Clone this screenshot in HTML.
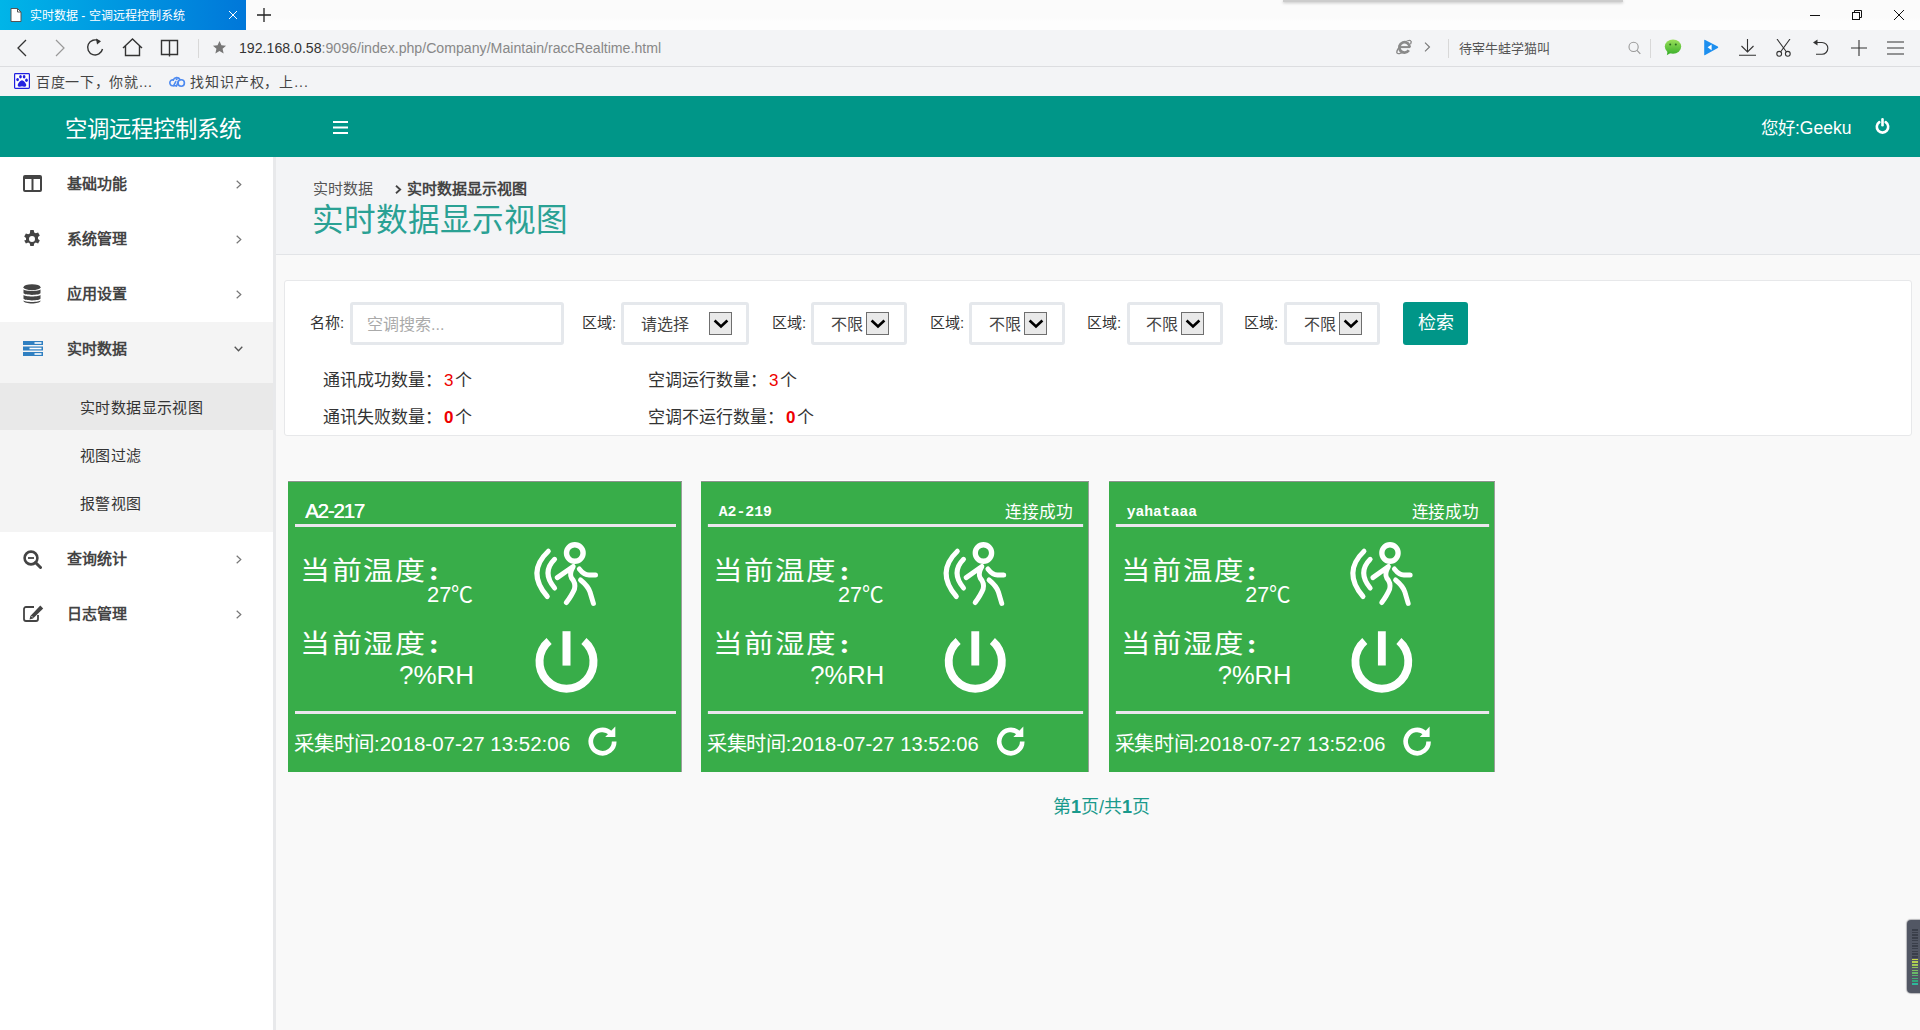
<!DOCTYPE html>
<html lang="zh-CN"><head><meta charset="utf-8">
<style>
*{margin:0;padding:0;box-sizing:border-box}
html,body{width:1920px;height:1030px;overflow:hidden;font-family:"Liberation Sans",sans-serif;background:#f9f9f9;position:relative}
.abs{position:absolute}
#tabbar{left:0;top:0;width:1920px;height:30px;background:linear-gradient(#fbfbfb,#fbfbfb 60%,#fdfdfd 70%,#fdfdfd)}
#tab{left:0;top:0;width:246px;height:30px;background:linear-gradient(90deg,#00b5e8,#0077d9)}
#addr{left:0;top:30px;width:1920px;height:37px;background:#f3f4f6;border-bottom:1px solid #dcdde0}
#bm{left:0;top:67px;width:1920px;height:29px;background:#f3f4f6}
#hdr{left:0;top:96px;width:1920px;height:61px;background:#009688}
#side{left:0;top:157px;width:276px;height:873px;background:#fff;border-right:3px solid #e8e9eb}
#crumb{left:276px;top:157px;width:1645px;height:98px;background:#f3f4f6;border-bottom:1px solid #e2e4e7}
#filter{left:284px;top:280px;width:1628px;height:156px;background:#fff;border:1px solid #e7e8ea;border-radius:3px}
.side-t{font-size:15px;line-height:22px;color:#444;font-weight:bold;white-space:nowrap}
.sub-t{font-size:15px;line-height:22px;color:#333;white-space:nowrap;letter-spacing:.4px;margin-top:2px}
.flab{font-size:15px;line-height:22px;color:#333;white-space:nowrap}
.inp{height:43px;border:3px solid #e5e8ec;border-radius:3px;background:#fff}
.stxt{font-size:16px;line-height:22px;color:#444;white-space:nowrap;margin-top:2px}
.arr{width:23px;height:23px;border:1px solid #6f6f6f;background:#e9e9e9;display:flex;align-items:center;justify-content:center}
.stat{font-size:17px;line-height:24px;color:#333;white-space:nowrap;margin-top:2px}
.stat span,.stat b{display:inline-block;margin:0 2px 0 2px}
.card{top:481px;height:291px;background:#38ad49;box-shadow:0 -1px 0 #fff, inset 0 1px 0 #8d938e, inset -1px 0 0 #9aa09b}
.card .abs{position:absolute}
.cname{color:#fff;white-space:nowrap;line-height:22px}
.cstat{font-family:"Liberation Serif",serif;font-size:17px;line-height:22px;color:#fff;white-space:nowrap}
.cline{height:3px;background:#ebe6ee}
.col{margin-left:2px;font-weight:bold;font-size:32px}
.cbig{font-family:"Liberation Serif",serif;font-size:30px;line-height:36px;letter-spacing:1.6px;transform:scaleY(.87);transform-origin:0 50%;color:#fff;white-space:nowrap}
.cval{color:#fff;white-space:nowrap;line-height:26px}
.ctime{font-size:20.5px;line-height:30px;color:#fff;white-space:nowrap}
</style></head><body>

<div id="tabbar" class="abs"></div>
<div class="abs" style="left:1283px;top:0;width:340px;height:2px;background:#ccc;box-shadow:0 1px 3px rgba(0,0,0,.25)"></div>
<div id="tab" class="abs"></div>
<svg class="abs" style="left:10px;top:8px" width="12" height="14" viewBox="0 0 12 14"><path d="M1 .5h6.5L11 4v9.5H1z" fill="#fff" stroke="#555" stroke-width="1"/><path d="M7.5 .5V4H11" fill="none" stroke="#555" stroke-width="1"/></svg>
<div class="abs" id="tabtitle" style="left:30px;top:6px;font-size:12px;color:#fff;white-space:nowrap">实时数据 - 空调远程控制系统</div>
<svg class="abs" style="left:228px;top:10px" width="10" height="10" viewBox="0 0 10 10"><path d="M1 1L9 9M9 1L1 9" stroke="#fff" stroke-width="1"/></svg>
<svg class="abs" style="left:257px;top:8px" width="14" height="14" viewBox="0 0 14 14"><path d="M7 0V14M0 7H14" stroke="#222" stroke-width="1.3"/></svg>
<svg class="abs" style="left:1810px;top:15px" width="10" height="1"><rect width="10" height="1" fill="#111"/></svg>
<svg class="abs" style="left:1852px;top:10px" width="10" height="10" viewBox="0 0 10 10"><rect x=".5" y="2.5" width="7" height="7" fill="none" stroke="#111"/><path d="M2.5 2.5V.5h7v7h-2" fill="none" stroke="#111"/></svg>
<svg class="abs" style="left:1894px;top:10px" width="10" height="10" viewBox="0 0 10 10"><path d="M0 0L10 10M10 0L0 10" stroke="#111" stroke-width="1"/></svg>
<div id="addr" class="abs"></div>
<svg class="abs" style="left:16px;top:39px" width="12" height="18" viewBox="0 0 12 18"><path d="M10 1L2 9L10 17" fill="none" stroke="#333" stroke-width="1.3"/></svg>
<svg class="abs" style="left:54px;top:39px" width="12" height="18" viewBox="0 0 12 18"><path d="M2 1L10 9L2 17" fill="none" stroke="#999" stroke-width="1.2"/></svg>
<svg class="abs" style="left:86px;top:37px" width="20" height="20" viewBox="0 0 20 20"><path d="M16.5 12A7.5 7.5 0 1 1 13 4" fill="none" stroke="#333" stroke-width="1.4"/><path d="M10 1.5L15 4.2L11 7.5z" fill="#333"/></svg>
<svg class="abs" style="left:122px;top:38px" width="21" height="19" viewBox="0 0 21 19"><path d="M1 10L10.5 1L20 10M3.5 8V17.5H17.5V8" fill="none" stroke="#333" stroke-width="1.4"/></svg>
<svg class="abs" style="left:160px;top:39px" width="19" height="18" viewBox="0 0 19 18"><path d="M1.5 1.5H9.5V15.5H1.5zM9.5 1.5H17.5V15.5H9.5z" fill="none" stroke="#333" stroke-width="1.4"/><path d="M9.5 15.5V17.5" stroke="#333" stroke-width="1.4"/></svg>
<div class="abs" style="left:198px;top:39px;width:1px;height:19px;background:#d8d8d8"></div>
<svg class="abs" style="left:212px;top:40px" width="15" height="15" viewBox="0 0 24 24"><path d="M12 1.5l3.1 7 7.4.6-5.6 4.9 1.7 7.4L12 17.5l-6.6 3.9 1.7-7.4L1.5 9.1l7.4-.6z" fill="#777"/></svg>
<div class="abs" id="url" style="left:239px;top:40px;font-size:14.15px;color:#888;white-space:nowrap"><span style="color:#333">192.168.0.58</span>:9096/index.php/Company/Maintain/raccRealtime.html</div>

<svg class="abs" style="left:1395px;top:38px" width="17" height="17" viewBox="0 0 17 17"><path d="M14.7 9.3A5.2 5.2 0 1 0 13.8 12.3" fill="none" stroke="#8a8a8a" stroke-width="2.8"/><path d="M4.8 9.1H15.2" stroke="#8a8a8a" stroke-width="2"/><clipPath id="iec"><path clip-rule="evenodd" d="M-2-2H19V19H-2zM9.5 9.3m-6.6 0a6.6 6.6 0 1 0 13.2 0a6.6 6.6 0 1 0-13.2 0z"/></clipPath><ellipse clip-path="url(#iec)" cx="9" cy="9" rx="9.2" ry="3.2" transform="rotate(-42 9 9)" fill="none" stroke="#8a8a8a" stroke-width="1.4"/></svg>
<svg class="abs" style="left:1424px;top:42px" width="7" height="10" viewBox="0 0 7 10"><path d="M1 .7L5.5 5L1 9.3" fill="none" stroke="#777" stroke-width="1.1"/></svg>
<div class="abs" style="left:1448px;top:39px;width:1px;height:19px;background:#d8d8d8"></div>
<div class="abs" id="srch" style="left:1459px;top:38px;font-size:13px;color:#555;white-space:nowrap">待宰牛蛙学猫叫</div>
<svg class="abs" style="left:1628px;top:41px" width="13" height="14" viewBox="0 0 13 14"><circle cx="5.6" cy="5.9" r="4.6" fill="none" stroke="#999" stroke-width="1.1"/><path d="M9 9.4L12.3 12.8" stroke="#999" stroke-width="1.2"/></svg>
<div class="abs" style="left:1650px;top:39px;width:1px;height:19px;background:#d8d8d8"></div>
<svg class="abs" style="left:1664px;top:39px" width="18" height="17" viewBox="0 0 18 17"><defs><linearGradient id="wg" x1="0" y1="0" x2="0" y2="1"><stop offset="0" stop-color="#9be05b"/><stop offset="1" stop-color="#3fb22d"/></linearGradient></defs><ellipse cx="9" cy="7.6" rx="8.2" ry="7.2" fill="url(#wg)"/><path d="M3.5 12.5L2.8 16.3L7 13.8z" fill="#3fb22d"/><circle cx="6.2" cy="5.6" r="1" fill="#2a6a20"/><circle cx="11.8" cy="5.6" r="1" fill="#2a6a20"/></svg>
<svg class="abs" style="left:1703px;top:39px" width="16" height="17" viewBox="0 0 16 17"><path d="M1.2 1.5Q1 .3 2.2.9L14.8 7.6Q15.8 8.3 14.8 9L2.2 15.9Q1 16.6 1.2 15.3z" fill="#1d8fef"/><path d="M4.6 8.3L8.6 5.4V11.2z" fill="#fff"/></svg>
<svg class="abs" style="left:1738px;top:39px" width="19" height="17" viewBox="0 0 19 17"><path d="M9.5 0V13M3.5 7L9.5 13L15.5 7M1 16.3H18" fill="none" stroke="#333" stroke-width="1.1"/></svg>
<svg class="abs" style="left:1775px;top:39px" width="17" height="18" viewBox="0 0 17 18"><path d="M2 0L11.5 13M15 0L5.5 13" fill="none" stroke="#333" stroke-width="1.1"/><circle cx="4.2" cy="14.8" r="2.4" fill="none" stroke="#333" stroke-width="1.1"/><circle cx="12.8" cy="14.8" r="2.4" fill="none" stroke="#333" stroke-width="1.1"/></svg>
<svg class="abs" style="left:1812px;top:39px" width="18" height="17" viewBox="0 0 18 17"><path d="M4 3.5H10A5.8 5.8 0 0 1 10 15.2H4" fill="none" stroke="#333" stroke-width="1.1"/><path d="M1 3.5L5.5 0.5V6.5z" fill="#333"/></svg>
<svg class="abs" style="left:1851px;top:40px" width="16" height="16" viewBox="0 0 16 16"><path d="M8 0V16M0 8H16" stroke="#333" stroke-width="1.1"/></svg>
<svg class="abs" style="left:1887px;top:41px" width="17" height="14" viewBox="0 0 17 14"><path d="M0 1H17M0 7H17M0 13H17" stroke="#333" stroke-width="1.1"/></svg>
<div id="bm" class="abs"></div>
<svg class="abs" style="left:14px;top:73px" width="16" height="16" viewBox="0 0 16 16"><rect x=".6" y=".6" width="14.8" height="14.8" rx=".8" fill="#fff" stroke="#1f1fe0" stroke-width="1.2"/><path d="M8 7.3C9.5 7.3 11.2 9.6 12 11C12.8 12.6 11.8 14.2 10.3 13.8C9.2 13.5 8.6 13.3 8 13.3S6.8 13.5 5.7 13.8C4.2 14.2 3.2 12.6 4 11C4.8 9.6 6.5 7.3 8 7.3z" fill="#2323e0"/><ellipse cx="3.6" cy="6.6" rx="1.35" ry="1.7" fill="#1f1fe0"/><ellipse cx="6.5" cy="3.8" rx="1.35" ry="1.8" fill="#1f1fe0"/><ellipse cx="10.1" cy="3.8" rx="1.35" ry="1.8" fill="#1f1fe0"/><ellipse cx="12.5" cy="7.2" rx="1.35" ry="1.7" fill="#1f1fe0"/></svg>
<div class="abs" id="bm1" style="left:36px;top:71px;font-size:14px;letter-spacing:.7px;color:#444;white-space:nowrap">百度一下，你就...</div>
<svg class="abs" style="left:168px;top:75px" width="18" height="13" viewBox="0 0 18 13"><g fill="none" stroke="#4d8af0" stroke-width="1.6" stroke-linecap="round"><path d="M5.2 4.8A2.8 2.8 0 1 0 4.5 10.8H8.5"/><path d="M5.2 5.2A3.7 3.7 0 0 1 12 4.6"/><circle cx="13.2" cy="8" r="3.2"/><path d="M7.8 6.6L5.6 10.6M10.6 5.8L8.5 11"/></g><circle cx="8.6" cy="4.3" r="1" fill="#4d8af0"/></svg>
<div class="abs" id="bm2" style="left:190px;top:71px;font-size:14px;letter-spacing:.9px;color:#444;white-space:nowrap">找知识产权，上...</div>
<div id="hdr" class="abs"></div>
<div class="abs" id="apptitle" style="left:65px;top:115px;font-size:22.4px;line-height:30px;color:#fff;font-weight:300;white-space:nowrap">空调远程控制系统</div>
<svg class="abs" style="left:333px;top:121px" width="15" height="13" viewBox="0 0 15 13"><path d="M0 1H15M0 6.5H15M0 12H15" stroke="#fff" stroke-width="2"/></svg>
<div class="abs" id="hello" style="left:1761px;top:117px;font-size:17.5px;line-height:22px;color:#fff;white-space:nowrap">您好:Geeku</div>
<svg class="abs" style="left:1875px;top:118px" width="15" height="16" viewBox="0 0 15 16"><path d="M4.3 4.2A5.7 5.7 0 1 0 10.7 4.2" fill="none" stroke="#fff" stroke-width="2.6" stroke-linecap="round"/><path d="M7.5 1.4V7.2" stroke="#fff" stroke-width="2.6" stroke-linecap="round"/></svg>
<div id="side" class="abs"></div>
<div class="abs" style="left:0;top:322px;width:273px;height:210px;background:#f4f4f4"></div>
<div class="abs" style="left:0;top:383px;width:273px;height:47px;background:#e9e9e9"></div>
<svg class="abs" style="left:23px;top:175px" width="19" height="17" viewBox="0 0 19 17"><rect x="1" y="1" width="17" height="15" rx="1" fill="none" stroke="#444" stroke-width="2"/><rect x="1" y="1" width="17" height="3" fill="#444"/><path d="M9.5 2V16" stroke="#444" stroke-width="2"/></svg>
<div class="abs side-t" style="left:67px;top:173px">基础功能</div>
<svg class="abs" style="left:236px;top:180px" width="6" height="9" viewBox="0 0 6 9"><path d="M.7 .7L4.8 4.5L.7 8.3" fill="none" stroke="#777" stroke-width="1.2"/></svg>
<svg class="abs" style="left:23px;top:230px" width="18" height="18" viewBox="0 0 18 18"><path fill="#444" fill-rule="evenodd" d="M7.3 0h3.4l.5 2.4 1.6.9 2.3-.8 1.7 2.9-1.8 1.6v1.9l1.8 1.6-1.7 2.9-2.3-.8-1.6.9-.5 2.4H7.3l-.5-2.4-1.6-.9-2.3.8-1.7-2.9L3 10V8L1.2 6.4l1.7-2.9 2.3.8 1.6-.9zM9 6a3 3 0 1 0 0 6 3 3 0 1 0 0-6z"/></svg>
<div class="abs side-t" style="left:67px;top:228px">系统管理</div>
<svg class="abs" style="left:236px;top:235px" width="6" height="9" viewBox="0 0 6 9"><path d="M.7 .7L4.8 4.5L.7 8.3" fill="none" stroke="#777" stroke-width="1.2"/></svg>
<svg class="abs" style="left:23px;top:284px" width="18" height="20" viewBox="0 0 18 20"><ellipse cx="9" cy="3.2" rx="8.5" ry="3" fill="#444"/><path d="M.5 5.2C1 7.5 17 7.5 17.5 5.2V9C17 11.5 1 11.5 .5 9z" fill="#444"/><path d="M.5 10.8C1 13 17 13 17.5 10.8V14.5C17 17 1 17 .5 14.5z" fill="#444"/><path d="M.5 16.3C1 18.5 17 18.5 17.5 16.3V17C17 20.3 1 20.3 .5 17z" fill="#444"/></svg>
<div class="abs side-t" style="left:67px;top:283px">应用设置</div>
<svg class="abs" style="left:236px;top:290px" width="6" height="9" viewBox="0 0 6 9"><path d="M.7 .7L4.8 4.5L.7 8.3" fill="none" stroke="#777" stroke-width="1.2"/></svg>
<svg class="abs" style="left:23px;top:341px" width="20" height="15" viewBox="0 0 20 15"><rect x="0" y="0" width="20" height="4" fill="#2f7fc1"/><rect x="0" y="5.5" width="20" height="4" fill="#2f7fc1"/><rect x="0" y="11" width="20" height="4" fill="#2f7fc1"/><rect x="11.5" y="1.2" width="7" height="1.6" fill="#fff"/><rect x="6.5" y="6.7" width="12" height="1.6" fill="#fff"/><rect x="11.5" y="12.2" width="7" height="1.6" fill="#fff"/></svg>
<div class="abs side-t" style="left:67px;top:338px">实时数据</div>
<svg class="abs" style="left:234px;top:346px" width="9" height="6" viewBox="0 0 9 6"><path d="M.7 .7L4.5 4.8L8.3 .7" fill="none" stroke="#555" stroke-width="1.3"/></svg>
<svg class="abs" style="left:23px;top:550px" width="19" height="19" viewBox="0 0 19 19"><circle cx="8" cy="8" r="6.4" fill="none" stroke="#444" stroke-width="2.6"/><path d="M5 8H11" stroke="#444" stroke-width="1.8"/><path d="M12.5 12.5L17.5 17.5" stroke="#444" stroke-width="3" stroke-linecap="round"/></svg>
<div class="abs side-t" style="left:67px;top:548px">查询统计</div>
<svg class="abs" style="left:236px;top:555px" width="6" height="9" viewBox="0 0 6 9"><path d="M.7 .7L4.8 4.5L.7 8.3" fill="none" stroke="#777" stroke-width="1.2"/></svg>
<svg class="abs" style="left:23px;top:605px" width="21" height="17" viewBox="0 0 21 17"><path d="M11 2H3A2 2 0 0 0 1 4V14A2 2 0 0 0 3 16H13A2 2 0 0 0 15 14V10" fill="none" stroke="#444" stroke-width="1.8"/><path d="M17.3 0.5L20.2 3.4L10 13.6L6.5 14.5L7.4 11z" fill="#444"/><path d="M8.6 11.2L9.8 12.4" stroke="#fff" stroke-width="1"/></svg>
<div class="abs side-t" style="left:67px;top:603px">日志管理</div>
<svg class="abs" style="left:236px;top:610px" width="6" height="9" viewBox="0 0 6 9"><path d="M.7 .7L4.8 4.5L.7 8.3" fill="none" stroke="#777" stroke-width="1.2"/></svg>
<div class="abs sub-t" style="left:80px;top:395px">实时数据显示视图</div>
<div class="abs sub-t" style="left:80px;top:443px">视图过滤</div>
<div class="abs sub-t" style="left:80px;top:491px">报警视图</div>
<div id="crumb" class="abs"></div>
<div class="abs" id="bc1" style="left:313px;top:178px;font-size:15px;line-height:22px;color:#555;white-space:nowrap">实时数据</div>
<svg class="abs" style="left:395px;top:185px" width="7" height="9" viewBox="0 0 7 9"><path d="M1 .8L5.2 4.5L1 8.2" fill="none" stroke="#444" stroke-width="1.8"/></svg>
<div class="abs" id="bc2" style="left:407px;top:178px;font-size:15px;line-height:22px;color:#444;font-weight:bold;white-space:nowrap">实时数据显示视图</div>
<div class="abs" id="ptitle" style="left:312px;top:200px;font-size:31.6px;line-height:40px;color:#2aa194;font-weight:300;white-space:nowrap">实时数据显示视图</div>
<div id="filter" class="abs"></div>
<div class="abs flab" style="left:310px;top:312px">名称:</div>
<div class="abs inp" style="left:350px;top:302px;width:214px"></div>
<div class="abs" id="ph" style="left:367px;top:314px;font-size:16px;line-height:22px;color:#aaa;white-space:nowrap">空调搜索...</div>
<div class="abs flab" style="left:582px;top:312px">区域:</div>
<div class="abs inp" style="left:621px;top:302px;width:128px"></div>
<div class="abs stxt" style="left:641px;top:312px">请选择</div>
<div class="abs arr" style="left:709px;top:312px"><svg width="20" height="20" viewBox="0 0 20 20"><path d="M3.6 6.5L10 12.5L16.4 6.5" fill="none" stroke="#000" stroke-width="2.6"/></svg></div>
<div class="abs flab" style="left:772px;top:312px">区域:</div>
<div class="abs inp" style="left:811px;top:302px;width:96px"></div>
<div class="abs stxt" style="left:831px;top:312px">不限</div>
<div class="abs arr" style="left:866px;top:312px"><svg width="20" height="20" viewBox="0 0 20 20"><path d="M3.6 6.5L10 12.5L16.4 6.5" fill="none" stroke="#000" stroke-width="2.6"/></svg></div>
<div class="abs flab" style="left:930px;top:312px">区域:</div>
<div class="abs inp" style="left:969px;top:302px;width:96px"></div>
<div class="abs stxt" style="left:989px;top:312px">不限</div>
<div class="abs arr" style="left:1024px;top:312px"><svg width="20" height="20" viewBox="0 0 20 20"><path d="M3.6 6.5L10 12.5L16.4 6.5" fill="none" stroke="#000" stroke-width="2.6"/></svg></div>
<div class="abs flab" style="left:1087px;top:312px">区域:</div>
<div class="abs inp" style="left:1127px;top:302px;width:96px"></div>
<div class="abs stxt" style="left:1146px;top:312px">不限</div>
<div class="abs arr" style="left:1181px;top:312px"><svg width="20" height="20" viewBox="0 0 20 20"><path d="M3.6 6.5L10 12.5L16.4 6.5" fill="none" stroke="#000" stroke-width="2.6"/></svg></div>
<div class="abs flab" style="left:1244px;top:312px">区域:</div>
<div class="abs inp" style="left:1284px;top:302px;width:96px"></div>
<div class="abs stxt" style="left:1304px;top:312px">不限</div>
<div class="abs arr" style="left:1339px;top:312px"><svg width="20" height="20" viewBox="0 0 20 20"><path d="M3.6 6.5L10 12.5L16.4 6.5" fill="none" stroke="#000" stroke-width="2.6"/></svg></div>
<div class="abs" style="left:1403px;top:302px;width:65px;height:43px;background:#009688;border-radius:3px"></div>
<div class="abs" id="btn" style="left:1418px;top:311px;font-size:18px;line-height:24px;color:#fff;white-space:nowrap">检索</div>
<div class="abs stat" id="st1" style="left:323px;top:367px">通讯成功数量：<span style="color:#e00">3</span>个</div>
<div class="abs stat" id="st2" style="left:323px;top:404px">通讯失败数量：<b style="color:#e00">0</b>个</div>
<div class="abs stat" id="st3" style="left:648px;top:367px">空调运行数量：<span style="color:#e00">3</span>个</div>
<div class="abs stat" id="st4" style="left:648px;top:404px">空调不运行数量：<b style="color:#e00">0</b>个</div>
<div class="abs card" style="left:288px;width:394px;transform:scaleX(1.0000);transform-origin:0 0">
<div class="abs cname" style="left:17px;top:19px;font-family:'Liberation Sans',sans-serif;font-size:20.5px;letter-spacing:-1.2px;text-shadow:.4px 0 0 #fff">A2-217</div>
<div class="abs cline" style="left:7px;top:43px;width:381px"></div>
<div class="abs cbig" style="left:12px;top:71px">当前温度<span class="col">:</span></div>
<div class="abs cval" style="left:139px;top:101px;font-size:22px">27℃</div>
<div class="abs cbig" style="left:12px;top:144px">当前湿度<span class="col">:</span></div>
<div class="abs cval" style="left:111px;top:181px;font-size:26px">?%RH</div>
<svg class="abs" style="left:232px;top:54px" width="95" height="165" viewBox="0 0 95 165"><g fill="none" stroke="#fff" stroke-width="5" stroke-linecap="round" stroke-linejoin="round"><path d="M28.3 16.2Q6 37.2 27.3 61.5M34.6 24.3Q21.4 37.4 34.6 53"/><circle cx="54.8" cy="18" r="8.3" stroke-width="5.4"/><path d="M37.3 42.6L53.2 31.5Q49 39 51.5 43Q56 48 54.5 54Q52 60 46.4 67.6M59.3 34Q64 40 69 40L75.5 40M60.5 45Q68 51 70 57L73.4 68.4"/></g><path d="M46.5 96.2V130.6" stroke="#fff" stroke-width="8"/><path d="M29.1 106A27 27 0 1 0 63.9 106" fill="none" stroke="#fff" stroke-width="8"/></svg>
<div class="abs cline" style="left:7px;top:230px;width:381px"></div>
<div class="abs ctime" style="left:6px;top:248px">采集时间:2018-07-27 13:52:06</div>
<svg class="abs" style="left:292px;top:239px" width="45" height="42" viewBox="0 0 45 42"><path d="M34.2 21.5A11.7 11.7 0 1 1 30.5 13" fill="none" stroke="#fff" stroke-width="4.7"/><path d="M35.3 6.6V16.9H25.2z" fill="#fff"/></svg>
</div>
<div class="abs card" style="left:701px;width:394px;transform:scaleX(0.9848);transform-origin:0 0">
<div class="abs cname" style="left:18px;top:21px;font-family:'Liberation Mono',monospace;font-size:15px;font-weight:bold">A2-219</div>
<div class="abs cstat" style="left:309px;top:21px">连接成功</div>
<div class="abs cline" style="left:7px;top:43px;width:381px"></div>
<div class="abs cbig" style="left:12px;top:71px">当前温度<span class="col">:</span></div>
<div class="abs cval" style="left:139px;top:101px;font-size:22px">27℃</div>
<div class="abs cbig" style="left:12px;top:144px">当前湿度<span class="col">:</span></div>
<div class="abs cval" style="left:111px;top:181px;font-size:26px">?%RH</div>
<svg class="abs" style="left:232px;top:54px" width="95" height="165" viewBox="0 0 95 165"><g fill="none" stroke="#fff" stroke-width="5" stroke-linecap="round" stroke-linejoin="round"><path d="M28.3 16.2Q6 37.2 27.3 61.5M34.6 24.3Q21.4 37.4 34.6 53"/><circle cx="54.8" cy="18" r="8.3" stroke-width="5.4"/><path d="M37.3 42.6L53.2 31.5Q49 39 51.5 43Q56 48 54.5 54Q52 60 46.4 67.6M59.3 34Q64 40 69 40L75.5 40M60.5 45Q68 51 70 57L73.4 68.4"/></g><path d="M46.5 96.2V130.6" stroke="#fff" stroke-width="8"/><path d="M29.1 106A27 27 0 1 0 63.9 106" fill="none" stroke="#fff" stroke-width="8"/></svg>
<div class="abs cline" style="left:7px;top:230px;width:381px"></div>
<div class="abs ctime" style="left:6px;top:248px">采集时间:2018-07-27 13:52:06</div>
<svg class="abs" style="left:292px;top:239px" width="45" height="42" viewBox="0 0 45 42"><path d="M34.2 21.5A11.7 11.7 0 1 1 30.5 13" fill="none" stroke="#fff" stroke-width="4.7"/><path d="M35.3 6.6V16.9H25.2z" fill="#fff"/></svg>
</div>
<div class="abs card" style="left:1109px;width:394px;transform:scaleX(0.9797);transform-origin:0 0">
<div class="abs cname" style="left:18px;top:21px;font-family:'Liberation Mono',monospace;font-size:15px;font-weight:bold">yahataaa</div>
<div class="abs cstat" style="left:309px;top:21px">连接成功</div>
<div class="abs cline" style="left:7px;top:43px;width:381px"></div>
<div class="abs cbig" style="left:12px;top:71px">当前温度<span class="col">:</span></div>
<div class="abs cval" style="left:139px;top:101px;font-size:22px">27℃</div>
<div class="abs cbig" style="left:12px;top:144px">当前湿度<span class="col">:</span></div>
<div class="abs cval" style="left:111px;top:181px;font-size:26px">?%RH</div>
<svg class="abs" style="left:232px;top:54px" width="95" height="165" viewBox="0 0 95 165"><g fill="none" stroke="#fff" stroke-width="5" stroke-linecap="round" stroke-linejoin="round"><path d="M28.3 16.2Q6 37.2 27.3 61.5M34.6 24.3Q21.4 37.4 34.6 53"/><circle cx="54.8" cy="18" r="8.3" stroke-width="5.4"/><path d="M37.3 42.6L53.2 31.5Q49 39 51.5 43Q56 48 54.5 54Q52 60 46.4 67.6M59.3 34Q64 40 69 40L75.5 40M60.5 45Q68 51 70 57L73.4 68.4"/></g><path d="M46.5 96.2V130.6" stroke="#fff" stroke-width="8"/><path d="M29.1 106A27 27 0 1 0 63.9 106" fill="none" stroke="#fff" stroke-width="8"/></svg>
<div class="abs cline" style="left:7px;top:230px;width:381px"></div>
<div class="abs ctime" style="left:6px;top:248px">采集时间:2018-07-27 13:52:06</div>
<svg class="abs" style="left:292px;top:239px" width="45" height="42" viewBox="0 0 45 42"><path d="M34.2 21.5A11.7 11.7 0 1 1 30.5 13" fill="none" stroke="#fff" stroke-width="4.7"/><path d="M35.3 6.6V16.9H25.2z" fill="#fff"/></svg>
</div>
<div class="abs" id="pager" style="left:1053px;top:795px;font-size:18px;line-height:24px;color:#1a9a8c;white-space:nowrap">第<b>1</b>页/共<b>1</b>页</div>
<div class="abs" style="left:1907px;top:920px;width:16px;height:73px;background:#525764;border-radius:4px 0 0 4px;box-shadow:0 0 1px 1px rgba(60,60,70,.35)"></div>
<div class="abs" style="left:1912px;top:929.0px;width:6px;height:1.6px;background:#3a3f4a"></div>
<div class="abs" style="left:1912px;top:931.7px;width:6px;height:1.6px;background:#3a3f4a"></div>
<div class="abs" style="left:1912px;top:934.4px;width:6px;height:1.6px;background:#3a3f4a"></div>
<div class="abs" style="left:1912px;top:937.1px;width:6px;height:1.6px;background:#3a3f4a"></div>
<div class="abs" style="left:1912px;top:939.8px;width:6px;height:1.6px;background:#3a3f4a"></div>
<div class="abs" style="left:1912px;top:942.5px;width:6px;height:1.6px;background:#3a3f4a"></div>
<div class="abs" style="left:1912px;top:945.2px;width:6px;height:1.6px;background:#3a3f4a"></div>
<div class="abs" style="left:1912px;top:947.9px;width:6px;height:1.6px;background:#3a3f4a"></div>
<div class="abs" style="left:1912px;top:950.6px;width:6px;height:1.6px;background:#3a3f4a"></div>
<div class="abs" style="left:1912px;top:953.3px;width:6px;height:1.6px;background:#3a3f4a"></div>
<div class="abs" style="left:1912px;top:956.0px;width:6px;height:1.6px;background:#3a3f4a"></div>
<div class="abs" style="left:1912px;top:958.7px;width:6px;height:1.6px;background:#c9d74a"></div>
<div class="abs" style="left:1912px;top:961.4px;width:6px;height:1.6px;background:#b6d14f"></div>
<div class="abs" style="left:1912px;top:964.1px;width:6px;height:1.6px;background:#a3cb55"></div>
<div class="abs" style="left:1912px;top:966.8px;width:6px;height:1.6px;background:#90c55b"></div>
<div class="abs" style="left:1912px;top:969.5px;width:6px;height:1.6px;background:#7dbf62"></div>
<div class="abs" style="left:1912px;top:972.2px;width:6px;height:1.6px;background:#6ab968"></div>
<div class="abs" style="left:1912px;top:974.9px;width:6px;height:1.6px;background:#57b36e"></div>
<div class="abs" style="left:1912px;top:977.6px;width:6px;height:1.6px;background:#44ad75"></div>
<div class="abs" style="left:1912px;top:980.3px;width:6px;height:1.6px;background:#31a77b"></div>
<div class="abs" style="left:1912px;top:983.0px;width:6px;height:1.6px;background:#2fb89a"></div>
</body></html>
